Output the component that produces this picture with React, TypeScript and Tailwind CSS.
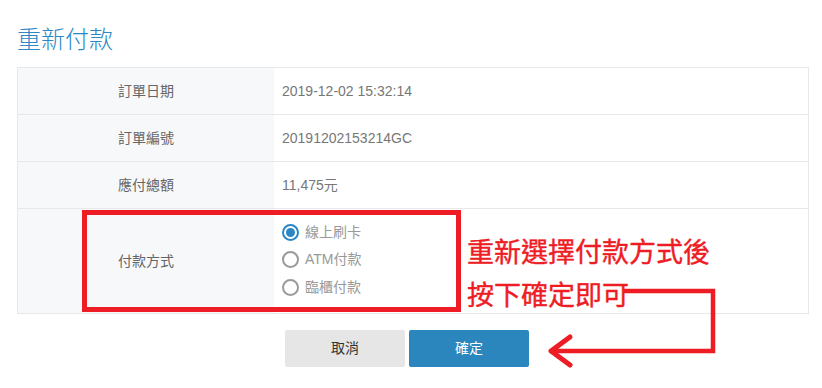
const rows = [
  { label: "訂單日期", value: "2019-12-02 15:32:14" },
  { label: "訂單編號", value: "20191202153214GC" },
  { label: "應付總額", value: "11,475元" },
];

const methods = [
  { name: "線上刷卡", checked: true },
  { name: "ATM付款", checked: false },
  { name: "臨櫃付款", checked: false },
];

function Radio({ checked }: { checked: boolean }) {
  return checked ? (
    <span className="flex h-[17px] w-[17px] items-center justify-center rounded-full border-2 border-[#2a86c4]">
      <span className="h-[9px] w-[9px] rounded-full bg-[#2a86c4]" />
    </span>
  ) : (
    <span className="h-[17px] w-[17px] rounded-full border-2 border-[#9a9a9a]" />
  );
}

export default function App() {
  return (
    <div
      className="relative h-[388px] w-[822px] overflow-hidden bg-white pt-[23px]"
      style={{ fontFamily: '"Liberation Sans", "Noto Sans CJK TC", sans-serif' }}
    >
      <h2 className="ml-[17px] text-[24px] font-light leading-[34px] text-[#2b88c6]">重新付款</h2>

      <div className="ml-[17px] mt-[10px] w-[792px] border border-[#e6e8eb] text-[14px]">
        {rows.map((row) => (
          <div key={row.label} className="flex h-[47px] border-b border-[#e6e8eb]">
            <div className="flex w-[256px] items-center justify-center bg-[#f7f8fa] text-[#666]">{row.label}</div>
            <div className="flex items-center pl-[8px] text-[#777]">{row.value}</div>
          </div>
        ))}
        <div className="flex h-[104px]">
          <div className="flex w-[256px] items-center justify-center bg-[#f7f8fa] text-[#666]">付款方式</div>
          <div className="flex flex-col justify-center pb-[3px] pl-[8px]">
            {methods.map((m) => (
              <label key={m.name} className="flex h-[27.5px] items-center gap-[6px] text-[#999]">
                <Radio checked={m.checked} />
                <span>{m.name}</span>
              </label>
            ))}
          </div>
        </div>
      </div>

      <div className="mt-[16px] flex justify-center gap-[4px] pr-[8px] text-[14px]">
        <button className="h-[37px] w-[120px] rounded-[2px] bg-[#e6e6e6] text-[#333]">取消</button>
        <button className="h-[37px] w-[120px] rounded-[2px] bg-[#2a86bd] text-white">確定</button>
      </div>

      {/* annotation overlay */}
      <div className="absolute left-[82px] top-[210px] h-[102px] w-[379px] border-[5px] border-[#ee1c24]" />
      <div
        className="absolute left-[467px] top-[229px] text-[27px] font-normal leading-[43px] text-[#ee1c24] [-webkit-text-stroke:0.4px_#ee1c24]"
        style={{ fontFamily: '"Noto Sans CJK TC", sans-serif' }}
      >
        <div>重新選擇付款方式後</div>
        <div>按下確定即可</div>
      </div>
      <svg className="absolute left-0 top-0" width="822" height="388" viewBox="0 0 822 388" fill="none">
        <path d="M623 291 H713 V351 H553" stroke="#ee1c24" strokeWidth="4.5" />
        <path d="M570 337 L551 351 L570 365" stroke="#ee1c24" strokeWidth="5" strokeLinecap="round" strokeLinejoin="round" />
      </svg>
    </div>
  );
}
